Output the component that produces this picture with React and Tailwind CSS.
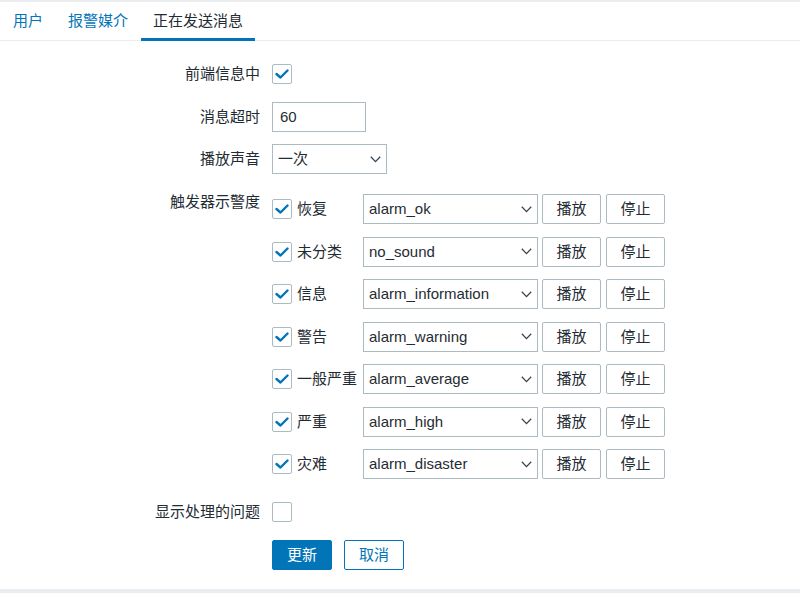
import React from "react";

const font = { fontFamily: '"Liberation Sans", "Noto Sans CJK SC", sans-serif' };

function Check({ checked }) {
  return (
    <div className="w-[20px] h-[20px] shrink-0 border border-[#acbbc2] rounded-[2px] bg-white flex items-center justify-center">
      {checked && (
        <svg width="14" height="12" viewBox="0 0 14 12">
          <polyline points="1.5,6 5.5,9.5 12.5,2.5" fill="none" stroke="#0275b8" strokeWidth="2.4" strokeLinecap="round" strokeLinejoin="round" />
        </svg>
      )}
    </div>
  );
}

function Chevron() {
  return (
    <svg width="11" height="7" viewBox="0 0 11 7" className="shrink-0">
      <polyline points="0.8,0.8 5.5,5.6 10.2,0.8" fill="none" stroke="#3a4448" strokeWidth="1.3" />
    </svg>
  );
}

function Select({ value, w }) {
  return (
    <div className={`${w} h-[30px] border border-[#acbbc2] bg-white flex items-center justify-between pl-[5px] pr-[5px] text-[15px] leading-[18px] text-[#1f2c33]`}>
      <span>{value}</span>
      <Chevron />
    </div>
  );
}

function Btn({ children, cls = "" }) {
  return (
    <div className={`w-[59px] h-[30px] border border-[#acbbc2] rounded-[2px] bg-white flex items-center justify-center text-[15px] leading-[18px] text-[#1f2c33] ${cls}`}>
      {children}
    </div>
  );
}

function Label({ children, top }) {
  return (
    <div className={`w-[260px] shrink-0 text-right text-[15px] leading-[18px] text-[#1f2c33] ${top ? "self-start" : ""}`}>
      {children}
    </div>
  );
}

const triggers = [
  ["恢复", "alarm_ok"],
  ["未分类", "no_sound"],
  ["信息", "alarm_information"],
  ["警告", "alarm_warning"],
  ["一般严重", "alarm_average"],
  ["严重", "alarm_high"],
  ["灾难", "alarm_disaster"],
];

export default function App() {
  return (
    <div className="w-[800px] h-[593px] bg-[#ebeef0] pt-[2px] overflow-hidden" style={font}>
      <div className="bg-white">
        <div className="flex border-b border-[#ebeef0] pl-px gap-px">
          <div className="h-[38px] px-3 flex items-center text-[15px] leading-[18px] text-[#0275b8]">用户</div>
          <div className="h-[38px] px-3 flex items-center text-[15px] leading-[18px] text-[#0275b8]">报警媒介</div>
          <div className="relative h-[38px] px-3 flex items-center text-[15px] leading-[18px] text-[#1f2c33]">
            正在发送消息
            <span className="absolute left-0 right-0 bottom-[-1px] h-[3px] bg-[#0275b8]" />
          </div>
        </div>

        <div className="flex flex-col pt-[18px] pb-[19px]">
          <div className="flex items-center h-[30px]">
            <Label>前端信息中</Label>
            <div className="ml-[12px]"><Check checked /></div>
          </div>

          <div className="flex items-center h-[30px] mt-[13px]">
            <Label>消息超时</Label>
            <div className="ml-[12px] w-[94px] h-[30px] border border-[#acbbc2] bg-white flex items-center pl-[7px] text-[15px] leading-[18px] text-[#1f2c33]">60</div>
          </div>

          <div className="flex items-center h-[30px] mt-[12px]">
            <Label>播放声音</Label>
            <div className="ml-[12px]"><Select value="一次" w="w-[115px]" /></div>
          </div>

          <div className="flex mt-[20px]">
            <div className="w-[260px] shrink-0 text-right text-[15px] leading-[16px] text-[#1f2c33]">触发器示警度</div>
            <div className="ml-[12px] flex flex-col gap-[12.5px]">
              {triggers.map(([l, s]) => (
                <div key={l} className="flex items-center h-[30px]">
                  <Check checked />
                  <div className="ml-[5px] w-[66px] text-[15px] leading-[18px] text-[#1f2c33]">{l}</div>
                  <Select value={s} w="w-[175px]" />
                  <Btn cls="ml-[4px]">播放</Btn>
                  <Btn cls="ml-[5px]">停止</Btn>
                </div>
              ))}
            </div>
          </div>

          <div className="flex items-center h-[30px] mt-[18px]">
            <Label>显示处理的问题</Label>
            <div className="ml-[12px]"><Check /></div>
          </div>

          <div className="flex items-center h-[30px] mt-[13px] pl-[272px] gap-[12px]">
            <div className="w-[60px] h-[30px] rounded-[2px] bg-[#0275b8] border border-[#0275b8] text-white flex items-center justify-center text-[15px] leading-[18px]">更新</div>
            <div className="w-[60px] h-[30px] rounded-[2px] bg-white border border-[#0275b8] text-[#0275b8] flex items-center justify-center text-[15px] leading-[18px]">取消</div>
          </div>
        </div>
      </div>
    </div>
  );
}
